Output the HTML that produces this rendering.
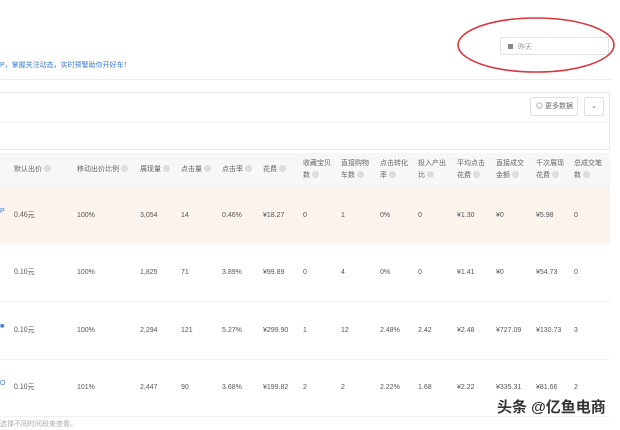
<!DOCTYPE html><html><head><meta charset="utf-8"><style>
body{margin:0;width:620px;height:429px;background:#fff;position:relative;overflow:hidden;font-family:"Liberation Sans","Noto Sans CJK SC",sans-serif;color:#555;font-size:7px}
.a{position:absolute;white-space:nowrap;line-height:10px}
.c{font-family:"Noto Sans CJK SC",sans-serif}
.q{display:inline-block;width:7px;height:7px;border-radius:50%;background:#ddd;vertical-align:-1px;margin-left:2px}
.h{color:#666;line-height:12px}
</style></head><body>
<div class="a" style="left:500px;top:37px;width:109px;height:18px;border:1px solid #e3e3e3;border-radius:2px;box-sizing:border-box"></div>
<div class="a" style="left:508px;top:44px;width:5px;height:5px;background:#888"></div>
<div class="a c" style="left:518px;top:42px;color:#999">昨天</div>
<svg class="a" style="left:455px;top:15px" width="162" height="60"><ellipse cx="81" cy="30" rx="78" ry="27" fill="none" stroke="#d9363e" stroke-width="1.6"/></svg>
<div class="a" style="left:0;top:61px;color:#3a7bd5">P，掌握关注动态，实时预警助你开好车！</div>
<div class="a" style="left:0;top:79px;width:612px;height:1px;background:#eee"></div>
<div class="a" style="left:-2px;top:92px;width:612px;height:58px;border:1px solid #e8e8e8;box-sizing:border-box"></div>
<div class="a" style="left:0;top:122px;width:610px;height:1px;background:#eee"></div>
<div class="a" style="left:530px;top:97px;width:48px;height:19px;border:1px solid #e0e0e0;border-radius:2px;box-sizing:border-box;color:#666;line-height:17px;padding-left:5px">◎ 更多数据</div>
<div class="a" style="left:584px;top:97px;width:20px;height:19px;border:1px solid #e0e0e0;border-radius:2px;box-sizing:border-box;color:#666;line-height:17px;text-align:center">⌄</div>
<div class="a" style="left:0;top:153px;width:610px;height:34px;background:#f7f7f7"></div>
<div class="a" style="left:0;top:187px;width:610px;height:57px;background:#fbf3ee"></div>
<div class="a" style="left:0;top:301px;width:610px;height:1px;background:#f0f0f0"></div>
<div class="a" style="left:0;top:359px;width:610px;height:1px;background:#f0f0f0"></div>
<div class="a" style="left:0;top:416px;width:610px;height:1px;background:#f0f0f0"></div>
<div class="a h" style="left:14px;top:164px">默认出价<span class="q"></span></div>
<div class="a h" style="left:77px;top:164px">移动出价比例<span class="q"></span></div>
<div class="a h" style="left:140px;top:164px">展现量<span class="q"></span></div>
<div class="a h" style="left:181px;top:164px">点击量<span class="q"></span></div>
<div class="a h" style="left:222px;top:164px">点击率<span class="q"></span></div>
<div class="a h" style="left:263px;top:164px">花费<span class="q"></span></div>
<div class="a h" style="left:303px;top:158px">收藏宝贝<br>数<span class="q"></span></div>
<div class="a h" style="left:341px;top:158px">直接购物<br>车数<span class="q"></span></div>
<div class="a h" style="left:380px;top:158px">点击转化<br>率<span class="q"></span></div>
<div class="a h" style="left:418px;top:158px">投入产出<br>比<span class="q"></span></div>
<div class="a h" style="left:457px;top:158px">平均点击<br>花费<span class="q"></span></div>
<div class="a h" style="left:496px;top:158px">直接成交<br>金额<span class="q"></span></div>
<div class="a h" style="left:536px;top:158px">千次展现<br>花费<span class="q"></span></div>
<div class="a h" style="left:574px;top:158px">总成交笔<br>数<span class="q"></span></div>
<div id="rows"></div>
<div class="a" style="left:0;top:420px;color:#aaa">选择不同时间段来查看。</div>
<div class="a" style="left:497px;top:399px;font-size:15px;line-height:18px;color:#333;font-weight:bold;text-shadow:0 0 2px #fff">头条 @亿鱼电商</div>
<script>
var xs=[14,77,140,181,222,263,303,341,380,418,457,496,536,574];
var d=[["0.46元","100%","3,054","14","0.46%","¥18.27","0","1","0%","0","¥1.30","¥0","¥5.98","0"],
["0.10元","100%","1,825","71","3.89%","¥99.89","0","4","0%","0","¥1.41","¥0","¥54.73","0"],
["0.10元","100%","2,294","121","5.27%","¥299.90","1","12","2.48%","2.42","¥2.48","¥727.09","¥130.73","3"],
["0.10元","101%","2,447","90","3.68%","¥199.82","2","2","2.22%","1.68","¥2.22","¥335.31","¥81.66","2"]];
var ys=[211,268,326,383],h="";
d.forEach(function(r,i){r.forEach(function(v,j){h+='<div class="a'+(j==0?' c':'')+'" style="left:'+xs[j]+'px;top:'+(ys[i]-(j==0?1:0))+'px;color:#555">'+v+'</div>'});
h+='<div class="a" style="left:0;top:'+(ys[i]-4)+'px;color:#3a7bd5">'+["P","","■","O"][i]+'</div>'});
document.getElementById("rows").innerHTML=h;
</script>
</body></html>
